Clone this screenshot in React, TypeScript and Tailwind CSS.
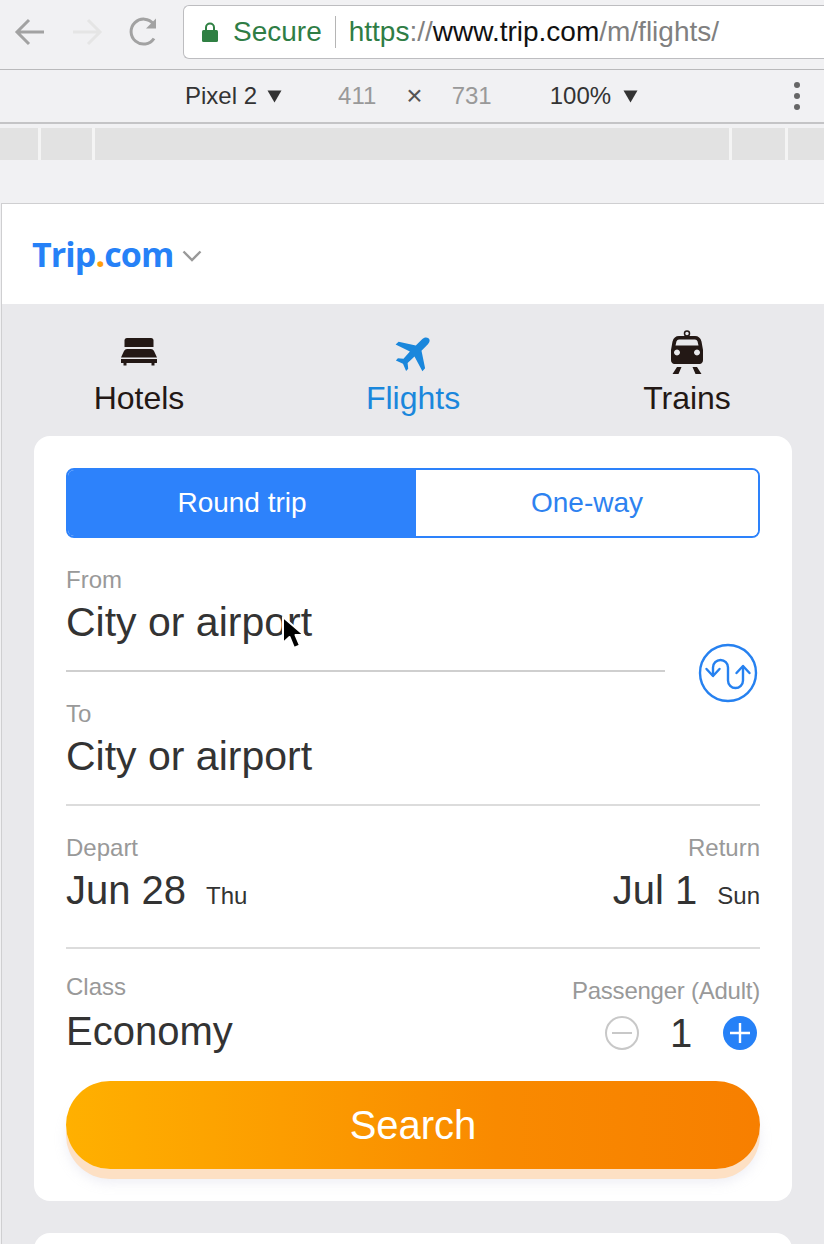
import React from "react";

const sans = "font-['Liberation_Sans',Arial,sans-serif]";

const Caret = () => (
  <svg width="15" height="13" viewBox="0 0 15 13" className="shrink-0">
    <path d="M0.5 0.5h14L7.5 12.5z" fill="#333" />
  </svg>
);

const BedIcon = () => (
  <svg width="36" height="28" viewBox="0 0 36 28" className="block">
    <path d="M3.5 2.5Q3.5 0 6 0h24q2.5 0 2.500 2.500v6.500H3.500z" fill="#231815" />
    <path d="M6 11h24q2 0 3 2l3 6.500H0L3 13q1-2 3-2z" fill="#231815" />
    <path d="M0 21h36v4h-2.500v2.500h-3V25H5.500v2.500h-3V25H0z" fill="#231815" />
  </svg>
);

const PlaneIcon = () => (
  <svg width="36" height="36" viewBox="0 0 36 36" className="block">
    <path
      d="M33.500 1.200c1.800 1.400 1.400 3.900-.6 6L26.500 13.800l3.600 17.400-2.700 3.100-7.900-14.700-6.900 6.500.6 5.600-2.100 2.300-3.100-7.200L.9 23.400l2-2.200 5.600.5 6.400-7.200L.6 7.600l3-2.800 17.200 3.700 6.300-6.300c2-2 4.600-2.100 6.400-1z"
      fill="#1a87dc"
    />
  </svg>
);

const TrainIcon = () => (
  <svg width="32" height="44" viewBox="0 0 32 44" className="block">
    <circle cx="16" cy="3.500" r="2.500" fill="none" stroke="#231815" strokeWidth="1.500" />
    <path
      fillRule="evenodd"
      d="M8 6h16q5 0 6.500 5.500L32 20v10q0 3-3 4H3q-3-1-3-4V20l1.500-8.500Q3 6 8 6zM8 9.500q-1.800 0-2.500 1.800L4.500 15.500h23l-1-4.200Q25.800 9.500 24 9.500zM6 19.500a3 3 0 1 0 .01 0zM26 19.500a3 3 0 1 0 .01 0z"
      fill="#231815"
    />
    <path d="M6 37h4.500L7.500 44H1.500zM21.500 37H26l4.500 7h-6z" fill="#231815" />
  </svg>
);

const SwapIcon = () => (
  <svg width="60" height="60" viewBox="0 0 60 60" fill="none" stroke="#2681f0" strokeWidth="2.400" strokeLinecap="round" strokeLinejoin="round">
    <circle cx="30" cy="30" r="28" />
    <path d="M15 32v-7.500a7.500 7.500 0 0 1 15 0v13a7.500 7.500 0 0 0 15 0V24" />
    <path d="M8.500 26l6.500 7 6.500-7M38.500 30l6.500-7 6.500 7" />
  </svg>
);

const Cursor = () => (
  <svg width="26" height="38" viewBox="0 0 26 38" className="absolute left-[279px] top-[614px]">
    <path d="M4 3v26l6.500-6 4.500 11 6-2.500-4.500-10.500h8.500z" fill="#000" stroke="#fff" strokeWidth="2" strokeLinejoin="round" />
  </svg>
);

const App: React.FC = () => {
  return (
    <div className={`relative w-[824px] h-[1244px] overflow-hidden bg-[#f1f1f3] ${sans}`}>
      {/* browser bar */}
      <div className="h-[70px] flex items-start border-b border-[#b9b9bb]">
        <svg width="32" height="30" viewBox="0 0 32 30" fill="none" strokeWidth="3" className="ml-[14px] mt-[17px]">
          <path d="M30 15H4M15 3L3 15l12 12" stroke="#a2a2a2" />
        </svg>
        <svg width="32" height="30" viewBox="0 0 32 30" fill="none" strokeWidth="3" className="ml-[26px] mt-[17px]">
          <path d="M1 15h26M16 3l12 12-12 12" stroke="#e5e5e5" />
        </svg>
        <svg width="32" height="32" viewBox="0 0 32 32" fill="none" className="ml-[24px] mt-[16px]">
          <path d="M26 22.500A12.500 12.500 0 1 1 25.500 8" stroke="#a2a2a2" strokeWidth="3" />
          <path d="M28 2.500v10H18z" fill="#a2a2a2" />
        </svg>
        <div className="ml-[23px] mt-[5px] flex-1 h-[54px] bg-white border border-[#bdbdc0] border-r-0 rounded-l-[6px] flex items-center text-[28px] leading-[32px] whitespace-nowrap">
          <svg width="18" height="20" viewBox="0 0 18 20" className="ml-[17px]">
            <path d="M5 8V5.500a4 4 0 0 1 8 0V8" fill="none" stroke="#2f8043" strokeWidth="2" />
            <rect x="1" y="8" width="16" height="12" rx="1.500" fill="#2f8043" />
          </svg>
          <span className="ml-[14px] text-[#2f7d45]">Secure</span>
          <span className="ml-[13px] w-px h-[32px] bg-[#b5b5b5]" />
          <span className="ml-[13px]">
            <span className="text-[#2f7d45]">https</span>
            <span className="text-[#808080]">://</span>
            <span className="text-[#111]">www.trip.com</span>
            <span className="text-[#808080]">/m/flights/</span>
          </span>
        </div>
      </div>

      {/* device toolbar */}
      <div className="h-[54px] flex items-center border-b-2 border-[#c4c4c6] text-[24px] leading-[28px] text-[#333] whitespace-nowrap">
        <span className="ml-[185px]">Pixel 2</span>
        <span className="ml-[10px]"><Caret /></span>
        <span className="ml-[56px] text-[#999]">411</span>
        <span className="ml-[30px] text-[#555] text-[28px]">×</span>
        <span className="ml-[29px] text-[#999]">731</span>
        <span className="ml-[58px]">100%</span>
        <span className="ml-[12px]"><Caret /></span>
        <div className="ml-[156px] flex flex-col gap-[5px]">
          <span className="w-[6px] h-[6px] rounded-full bg-[#666]" />
          <span className="w-[6px] h-[6px] rounded-full bg-[#666]" />
          <span className="w-[6px] h-[6px] rounded-full bg-[#666]" />
        </div>
      </div>

      {/* ruler */}
      <div className="mt-[4px] h-[32px] bg-[#e2e2e2] flex">
        <span className="ml-[38px] w-[3px] bg-[#f4f4f4]" />
        <span className="ml-[51px] w-[3px] bg-[#f4f4f4]" />
        <span className="ml-[634px] w-[3px] bg-[#f4f4f4]" />
        <span className="ml-[53px] w-[3px] bg-[#f4f4f4]" />
      </div>

      {/* phone viewport */}
      <div className="mt-[43px] ml-[1px] border-l border-t border-[#cfcfd1] bg-[#e9e9ec] h-[1041px]">
        <div className="h-[100px] bg-white flex items-center pl-[30px]">
          <span className="font-['Open_Sans',sans-serif] font-bold text-[34px] leading-[40px] tracking-[-0.9px] text-[#2681f7]">
            Trip<span className="text-[#ff9f0a]">.</span>com
          </span>
          <svg width="20" height="12" viewBox="0 0 20 12" fill="none" className="ml-[9px] mt-[3px]">
            <path d="M1.500 1.500L10 10l8.500-8.500" stroke="#999" strokeWidth="2.400" />
          </svg>
        </div>

        <div className="grid grid-cols-3 h-[132px] text-[32px] leading-[38px] text-[#231815]">
          <div className="flex flex-col items-center">
            <div className="h-[78px] flex items-end pb-[16px]"><BedIcon /></div>
            <span className="-mt-[3px]">Hotels</span>
          </div>
          <div className="flex flex-col items-center text-[#1a87dc]">
            <div className="h-[78px] flex items-end pb-[9px]"><PlaneIcon /></div>
            <span className="-mt-[3px]">Flights</span>
          </div>
          <div className="flex flex-col items-center">
            <div className="h-[78px] flex items-end pb-[8px]"><TrainIcon /></div>
            <span className="-mt-[3px]">Trains</span>
          </div>
        </div>

        <div className="relative mx-[32px] bg-white rounded-[16px] p-[32px]">
          <div className="flex h-[70px] rounded-[8px] border-2 border-[#2d82fb] overflow-hidden text-[28px]">
            <div className="w-[348px] bg-[#2d82fb] text-white flex items-center justify-center">Round trip</div>
            <div className="flex-1 bg-white text-[#2d82f0] flex items-center justify-center">One-way</div>
          </div>

          <div className="mr-[95px] pb-[24px] border-b-2 border-[#cfcfcf]">
            <div className="mt-[28px] text-[24px] leading-[28px] text-[#999]">From</div>
            <div className="mt-[4px] text-[41px] leading-[48px] text-[#333]">City or airport</div>
          </div>
          <div className="absolute right-[34px] top-[207px]"><SwapIcon /></div>

          <div className="pb-[24px] border-b-2 border-[#dcdcdc]">
            <div className="mt-[28px] text-[24px] leading-[28px] text-[#999]">To</div>
            <div className="mt-[4px] text-[41px] leading-[48px] text-[#333]">City or airport</div>
          </div>

          <div className="flex justify-between pb-[24px] border-b-2 border-[#dcdcdc]">
            <div>
              <div className="mt-[28px] text-[24px] leading-[28px] text-[#999]">Depart</div>
              <div className="mt-[4px] leading-[48px] text-[#333]">
                <span className="text-[40px]">Jun 28</span>
                <span className="ml-[20px] text-[24px]">Thu</span>
              </div>
            </div>
            <div className="text-right">
              <div className="mt-[28px] text-[24px] leading-[28px] text-[#999]">Return</div>
              <div className="mt-[4px] leading-[48px] text-[#333]">
                <span className="text-[40px]">Jul 1</span>
                <span className="ml-[20px] text-[24px]">Sun</span>
              </div>
            </div>
          </div>

          <div className="flex justify-between">
            <div>
              <div className="mt-[24px] text-[24px] leading-[28px] text-[#999]">Class</div>
              <div className="mt-[6px] text-[40px] leading-[48px] text-[#333]">Economy</div>
            </div>
            <div className="flex flex-col items-end">
              <div className="mt-[28px] text-[24px] leading-[28px] tracking-[-0.24px] text-[#999]">Passenger (Adult)</div>
              <div className="mt-[10px] flex items-center h-[36px] text-[40px] text-[#333] pr-[3px]">
                <span className="w-[34px] h-[34px] rounded-full border-2 border-[#c8c8c8] flex items-center justify-center">
                  <span className="w-[20px] h-[2px] bg-[#c8c8c8]" />
                </span>
                <span className="w-[84px] text-center">1</span>
                <svg width="34" height="34" viewBox="0 0 34 34">
                  <circle cx="17" cy="17" r="17" fill="#2681f7" />
                  <path d="M17 7v20M7 17h20" stroke="#fff" strokeWidth="2.400" />
                </svg>
              </div>
            </div>
          </div>

          <div className="mt-[26px] h-[88px] rounded-full bg-[linear-gradient(90deg,#ffb000_0%,#f98a00_62%,#f77f00_100%)] shadow-[0_10px_0_#fde0c4,0_14px_12px_rgba(190,190,215,0.25)] flex items-center justify-center text-white text-[40px]">
            Search
          </div>
        </div>

        <div className="mt-[32px] mx-[32px] h-[40px] bg-white rounded-t-[16px]" />
      </div>

      <Cursor />
    </div>
  );
};

export default App;
